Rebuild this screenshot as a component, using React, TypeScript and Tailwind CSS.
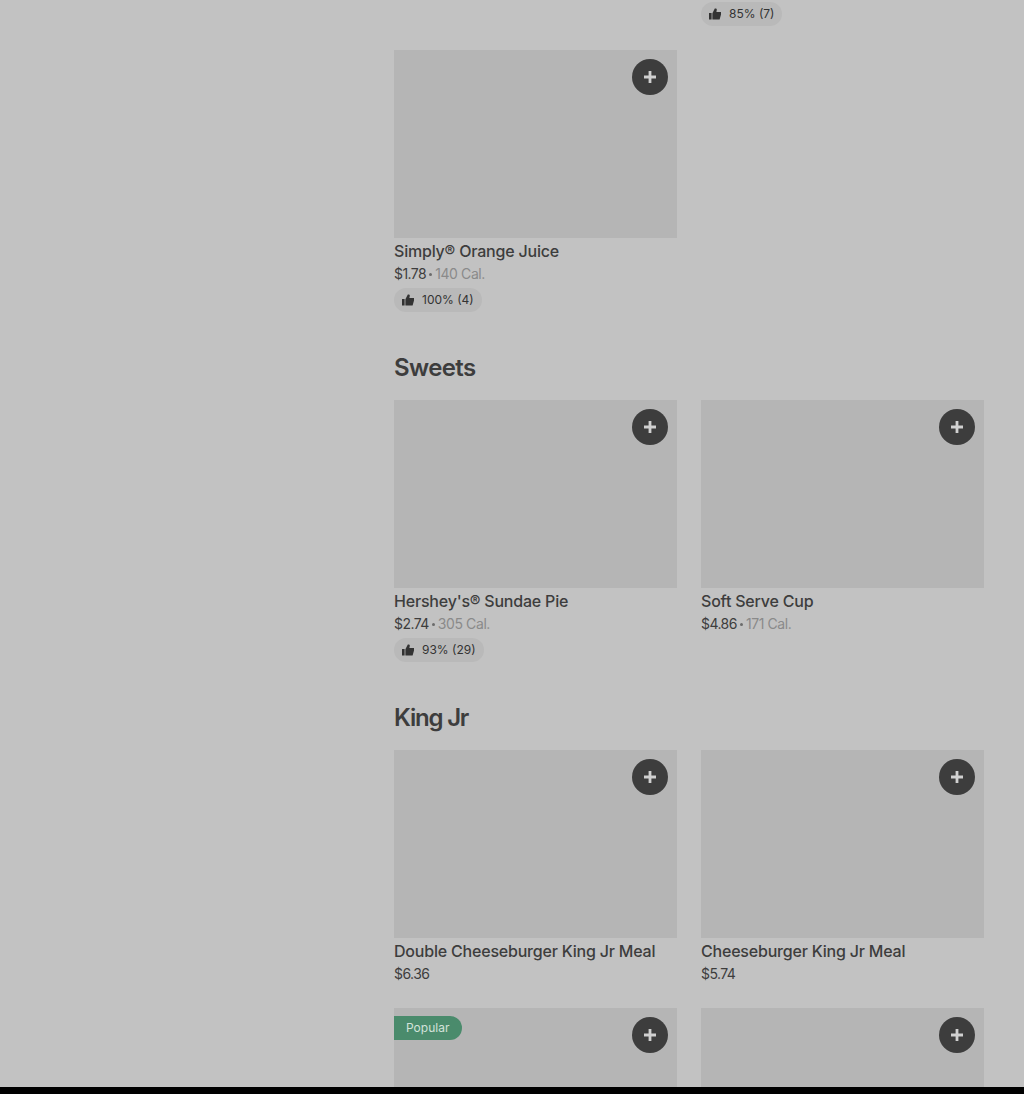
const ThumbIcon = () => (
  <svg width="12" height="12" viewBox="0 0 12 12" className="shrink-0" fill="#333333">
    <path d="M0 5h2.6v6.5H0z" />
    <path d="M3.4 5.2 5.8.4h.9c.7 0 1.2.6 1.1 1.3L7.4 4H12v2.4l-1.4 5.1H3.4z" />
  </svg>
);

const PlusButton = () => (
  <button className="absolute top-[9px] right-[9px] flex h-9 w-9 items-center justify-center rounded-full bg-[#3d3d3d]">
    <svg width="12" height="12" viewBox="0 0 12 12" fill="#d0d0d0">
      <path d="M4.6 0h2.8v4.6H12v2.8H7.4V12H4.6V7.4H0V4.6h4.6z" />
    </svg>
  </button>
);

const Rating = ({ label }: { label: string }) => (
  <div className="mt-1 flex h-6 w-fit items-center gap-2 rounded-full bg-[#b9b9b9] px-2 text-xs leading-4 text-[#333333]">
    <ThumbIcon />
    <span>{label}</span>
  </div>
);

type CardProps = {
  title: string;
  price: string;
  cal?: string;
  rating?: string;
};

const Card = ({ title, price, cal, rating }: CardProps) => (
  <div>
    <div className="relative h-[188px] bg-[#b5b5b5]">
      <PlusButton />
    </div>
    <div className="mt-px text-base leading-6 font-medium tracking-[-0.2px] text-[#3d3d3d]">{title}</div>
    <div className="mt-px flex items-center text-sm leading-5 tracking-[-0.55px] text-[#3d3d3d]">
      {price}
      {cal && (
        <>
          <span className="mx-[3px] h-[3px] w-[3px] rounded-full bg-[#6b6b6b]" />
          <span className="tracking-[-0.4px] text-[#8a8a8a]">{cal}</span>
        </>
      )}
    </div>
    {rating && <Rating label={rating} />}
  </div>
);

const Heading = ({ children, className }: { children: string; className: string }) => (
  <h2 className={`mt-[42px] mb-[18px] text-2xl leading-[28px] font-semibold text-[#3d3d3d] ${className}`}>
    {children}
  </h2>
);

export default function App() {
  return (
    <div className="flex h-[1094px] flex-col overflow-hidden font-['Inter',sans-serif]">
      <main className="min-h-0 flex-1 overflow-hidden bg-[#c2c2c2]">
        {/* page is scrolled, the card above the pill is out of view */}
        <div className="-mt-[2px] ml-[394px] w-[590px]">
          <div className="grid grid-cols-2 gap-x-6">
            <div />
            <Rating label="85% (7)" />
          </div>
          <div className="mt-6 grid grid-cols-2 gap-x-6">
            <Card title="Simply® Orange Juice" price="$1.78" cal="140 Cal." rating="100% (4)" />
          </div>

          <Heading className="tracking-[-0.6px]">Sweets</Heading>
          <div className="grid grid-cols-2 gap-x-6">
            <Card title="Hershey's® Sundae Pie" price="$2.74" cal="305 Cal." rating="93% (29)" />
            <Card title="Soft Serve Cup" price="$4.86" cal="171 Cal." />
          </div>

          <Heading className="tracking-[-1.2px]">King Jr</Heading>
          <div className="grid grid-cols-2 gap-x-6 gap-y-6">
            <Card title="Double Cheeseburger King Jr Meal" price="$6.36" />
            <Card title="Cheeseburger King Jr Meal" price="$5.74" />
            <div className="relative h-[188px] bg-[#b5b5b5]">
              <div className="absolute top-2 left-0 flex h-6 items-center rounded-r-full bg-[#4a8b6c] pr-[13px] pl-3 text-xs text-[#d3e2da]">
                Popular
              </div>
              <PlusButton />
            </div>
            <div className="relative h-[188px] bg-[#b5b5b5]">
              <PlusButton />
            </div>
          </div>
        </div>
      </main>
      <div className="h-[7px] shrink-0 bg-black" />
    </div>
  );
}
